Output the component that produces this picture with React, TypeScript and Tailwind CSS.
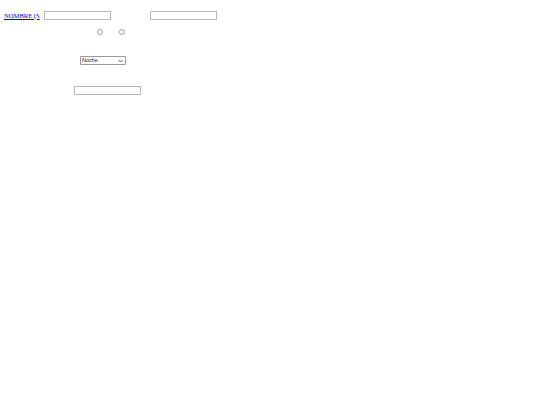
export default function App() {
  return (
    <div className="w-[540px] h-[405px] bg-white" style={{ fontFamily: '"Liberation Serif", serif' }}>
      {/* name row */}
      <div className="flex items-center pt-[11px] pl-[4px] h-[20px]">
        <a href="#" className="text-[6.6px] leading-[9px] text-[#0000ee] underline whitespace-nowrap w-[36px] -mt-[1px]">
          NOMBRE (S
        </a>
        <input className="ml-[4px] w-[67px] h-[9px] border border-[#b8b8b8] bg-white" />
        <input className="ml-[39px] w-[67px] h-[9px] border border-[#b8b8b8] bg-white" />
      </div>
      {/* radio row */}
      <div className="flex items-center pt-[9px] pl-[97px] h-[15px]">
        <span className="w-[6px] h-[6px] rounded-full border border-[#a0a0a0] bg-white" />
        <span className="ml-[16px] w-[6px] h-[6px] rounded-full border border-[#a0a0a0] bg-white" />
      </div>
      {/* schedule select */}
      <div className="pt-[21px] pl-[80px]">
        <div
          className="flex items-center justify-between w-[46px] h-[9px] border border-[#9a9a9a] rounded-[1px] bg-white px-[1px]"
          style={{ fontFamily: '"Liberation Sans", sans-serif' }}
        >
          <span className="text-[5.5px] leading-[7px] text-[#222]">Noche</span>
          <svg width="5" height="4" viewBox="0 0 5 4" className="mr-[1px]">
            <path d="M0.5 1 L2.5 3 L4.5 1" stroke="#333" strokeWidth="0.8" fill="none" />
          </svg>
        </div>
      </div>
      {/* last field */}
      <div className="pt-[21px] pl-[74px]">
        <input className="block w-[67px] h-[9px] border border-[#b8b8b8] bg-white" />
      </div>
    </div>
  );
}
